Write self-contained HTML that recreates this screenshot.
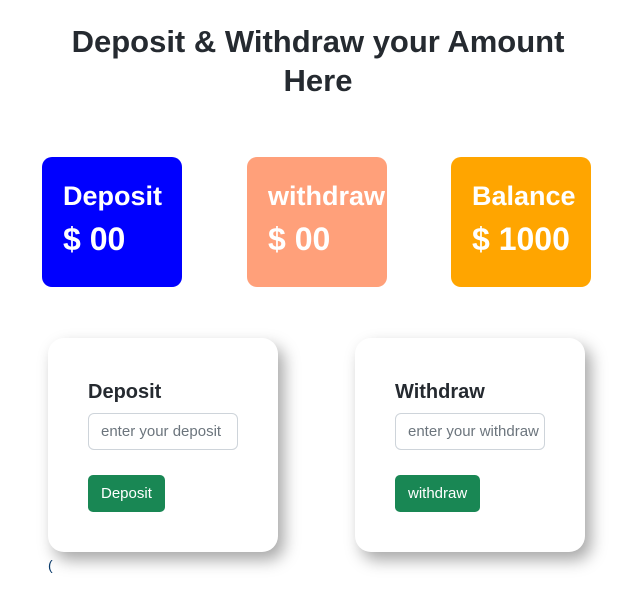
<!DOCTYPE html>
<html><head><style>
body{margin:0;width:641px;height:597px;background:#fff;font-family:"Liberation Sans",sans-serif;color:#212529;position:relative;overflow:hidden}
h1{position:absolute;left:0;width:636px;top:22px;margin:0;text-align:center;font-size:31px;font-weight:bold;line-height:39px;color:#252a30}
.s{position:absolute;top:157px;width:140px;height:130px;border-radius:10px;color:#fff;overflow:hidden;white-space:nowrap}
.s .t{position:absolute;left:21px;top:24px;font-size:27px;font-weight:600}
.s .v{position:absolute;left:21px;top:64px;font-size:32px;font-weight:600}
.c{position:absolute;top:338px;width:230px;height:214px;border-radius:16px;background:#fff;box-shadow:6px 8px 16px rgba(0,0,0,.35)}
.c .h{position:absolute;left:40px;top:43px;font-size:20px;font-weight:bold;color:#252a30}
.c .i{position:absolute;left:40px;top:75px;border:1px solid #ced4da;border-radius:6px;box-sizing:border-box;width:150px;height:37px;font-size:15px;color:#6c757d;padding:9px 12px;white-space:nowrap;overflow:hidden}
.c .b{position:absolute;left:40px;top:137px;height:37px;padding:0 13px;background:#198754;color:#fff;border-radius:5px;font-size:15px;line-height:37px}
</style></head><body>
<h1>Deposit &amp; Withdraw your Amount<br>Here</h1>
<div class="s" style="left:42px;background:#0000ff"><div class="t">Deposit</div><div class="v">$ 00</div></div>
<div class="s" style="left:247px;background:#ffa07a"><div class="t">withdraw</div><div class="v">$ 00</div></div>
<div class="s" style="left:451px;background:#ffa500"><div class="t">Balance</div><div class="v">$ 1000</div></div>
<div class="c" style="left:48px"><div class="h">Deposit</div><div class="i">enter your deposit</div><div class="b">Deposit</div></div>
<div class="c" style="left:355px"><div class="h">Withdraw</div><div class="i">enter your withdraw</div><div class="b">withdraw</div></div>
<div style="position:absolute;left:48px;top:557px;font-size:14px;color:#0a3a6a">(</div>
</body></html>
